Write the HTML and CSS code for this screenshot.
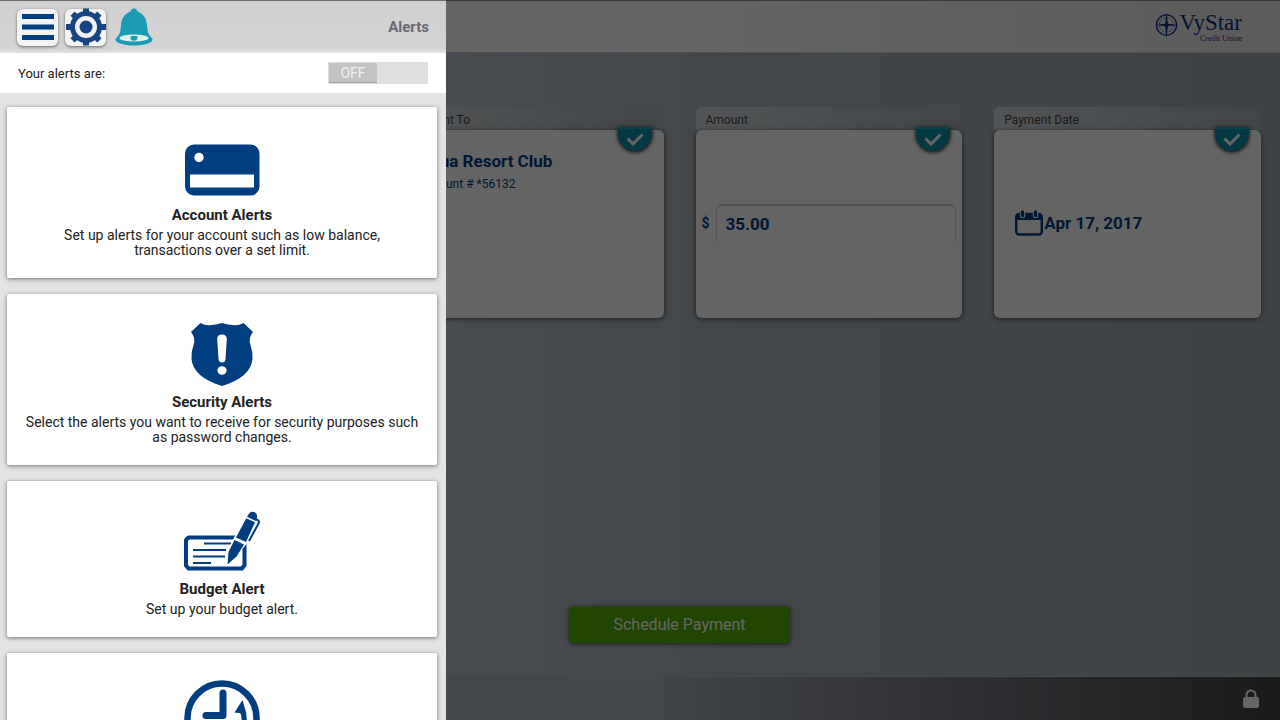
FILE: index.html
```
<!DOCTYPE html>
<html lang="en">

<head>
    <meta charset="UTF-8">
    <meta name="viewport" content="width=device-width, initial-scale=1.0">
    <title>Alerts</title>
    <link rel="stylesheet" href="styles.css">
</head>

<body>
    <div class="page">
        <header class="top">
            <a href="#" class="logo">
                <svg width="25" height="32" viewBox="0 0 26 32" fill="none" stroke="#0b2f78">
                    <circle cx="13" cy="16" r="10.5" stroke-width="1.4" />
                    <circle cx="13" cy="16" r="7.5" stroke-width="0.8" stroke-dasharray="2 1.5" />
                    <path d="M13 3l1.400 11.600L25 16l-10.600 1.400L13 29l-1.400-11.600L1 16l10.600-1.400z" fill="#0b2f78" stroke="none" />
                </svg>
                <span class="brand">VyStar<small>Credit Union</small></span>
            </a>
        </header>

        <main>
            <div class="cards">
                <section class="card">
                    <h2>Payment To</h2>
                    <div class="card-body payee">
                        <strong>Aqua Resort Club</strong>
                        <span>Account # *56132</span>
                        <i class="done"><svg width="18" height="14" viewBox="0 0 18 14"><path d="M1.500 6.500L7 12l9.500-9.500" /></svg></i>
                    </div>
                </section>
                <section class="card">
                    <h2><label for="amount">Amount</label></h2>
                    <div class="card-body amount">
                        <span>$</span>
                        <input type="text" id="amount" value="35.00">
                        <i class="done"><svg width="18" height="14" viewBox="0 0 18 14"><path d="M1.500 6.500L7 12l9.500-9.500" /></svg></i>
                    </div>
                </section>
                <section class="card">
                    <h2>Payment Date</h2>
                    <div class="card-body date">
                        <svg width="30" height="26" viewBox="0 0 30 26">
                            <rect x="2.200" y="4" width="25.600" height="20.500" rx="3" fill="none" stroke="#003b82" stroke-width="2.400" />
                            <path d="M2 10V5.500q0-2 2-2h22q2 0 2 2V10z" fill="#003b82" />
                            <path d="M8.500 1v4.500M21.500 1v4.500" stroke="#fff" stroke-width="5.500" stroke-linecap="round" />
                            <path d="M8.500 2v3.500M21.500 2v3.500" stroke="#003b82" stroke-width="3.400" stroke-linecap="round" />
                        </svg>
                        <strong>Apr 17, 2017</strong>
                        <i class="done"><svg width="18" height="14" viewBox="0 0 18 14"><path d="M1.500 6.500L7 12l9.500-9.500" /></svg></i>
                    </div>
                </section>
            </div>
            <button type="button" class="schedule">Schedule Payment</button>
        </main>

        <footer>
            <svg width="16" height="20" viewBox="0 0 16 20">
                <path d="M3.500 9V6a4.500 4.500 0 0 1 9 0v3" fill="none" stroke="#fff" stroke-width="2" />
                <rect x="0" y="8" width="16" height="11" rx="2.500" fill="#fff" />
            </svg>
        </footer>
    </div>

    <div class="overlay"></div>

    <aside class="drawer">
        <div class="drawer-top">
            <button type="button" class="tool" aria-label="Menu">
                <svg width="32" height="28" viewBox="0 0 32 28" fill="#003e80">
                    <path d="M0 1h32v5H0zM0 11.500h32v5H0zM0 22h32v5H0z" />
                </svg>
            </button>
            <button type="button" class="tool" aria-label="Settings">
                <svg width="40" height="38" viewBox="-20 -19 40 38" fill="#174584">
                    <path d="M-3-18.500h6v37h-6zM-20-3h40v6h-40z" />
                    <path d="M-3-19h6v38h-6zM-19-3h38v6h-38z" transform="rotate(45)" />
                    <circle r="16" />
                    <circle r="11" fill="#f3f3f3" />
                    <circle r="6.500" />
                </svg>
            </button>
            <button type="button" class="tool bell" aria-label="Alerts">
                <svg width="38" height="38" viewBox="0 0 38 38">
                    <path d="M19 0.500c2 0 3 1 3.200 2.700C29 6 31.500 11 32 17c.5 6 1 8.500 3.500 11.500 1.200 1.400 2 2 2 3C37.500 35 29 37.500 19 37.500S.5 35 .5 31.500c0-1 .8-1.600 2-3C5 25.500 5.500 23 6 17 6.500 11 9 6 15.800 3.200 16 1.500 17 .5 19 .5z" fill="#1a9cb4" />
                    <ellipse cx="19" cy="30" rx="14.500" ry="3.600" fill="#e3eff1" />
                    <path d="M15.500 28.500q3.500-1.500 7 0v1.200a3.500 3 0 0 1-7 0z" fill="#1a9cb4" />
                </svg>
            </button>
            <h1>Alerts</h1>
        </div>

        <label class="status">
            Your alerts are:
            <span class="switch"><input type="checkbox"><b>OFF</b></span>
        </label>

        <nav>
            <a href="#" class="alert">
                <svg width="80" height="66" viewBox="0 0 80 66">
                    <rect x="3" y="10.500" width="74.500" height="51" rx="9" fill="#003e80" />
                    <circle cx="17" cy="23.500" r="4.700" fill="#fff" />
                    <path d="M8 40.500h64v13H8z" fill="#fff" />
                </svg>
                <h3>Account Alerts</h3>
                <p>Set up alerts for your account such as low balance, transactions over a set limit.</p>
            </a>
            <a href="#" class="alert">
                <svg width="80" height="66" viewBox="0 0 80 66">
                    <path d="M18.500 2q4.500 2.500 9 2.300Q34 4 40 2q6 2 12.500 2.300 4.500.2 9-2.300L71 11q-5 6-2.500 13 2.500 7 2 14-1.500 18-30.500 27Q11 56 9.500 38q-.5-7 2-14Q14 17 9 11z" fill="#003e80" />
                    <path d="M35.200 18q0-4.500 4.800-4.500t4.800 4.500L43.500 38q-.4 3.500-3.500 3.500T36.500 38z" fill="#fff" />
                    <ellipse cx="40" cy="49.500" rx="4.600" ry="4.200" fill="#fff" />
                </svg>
                <h3>Security Alerts</h3>
                <p>Select the alerts you want to receive for security purposes such as password changes.</p>
            </a>
            <a href="#" class="alert">
                <svg width="80" height="66" viewBox="0 0 80 66">
                    <path d="M6.500 29.500H60l2.500 2.500v25L60 60.500H6.500L4 57.500V32z" fill="none" stroke="#003e80" stroke-width="4" stroke-linejoin="round" />
                    <path d="M22 35.500h27M11 42h33M11 48.500h32M11 55h18" stroke="#003e80" stroke-width="2.200" />
                    <path d="M43 58l3-17 16-30 8-10 9 7-1 11-16 20z" fill="#fff" />
                    <path d="M45.500 56.500L46.500 44l6-12 9.500 4.500-7.500 12z" fill="#003e80" />
                    <path d="M54 29.500L65 9q3-6.500 7-5 4.500 2 2.500 7L64 34z" fill="#003e80" />
                    <path d="M64.500 9.500l10 4.500" stroke="#fff" stroke-width="1.600" />
                    <path d="M73.500 11l3 1.500q1 1.500 0 3L67 33" fill="none" stroke="#003e80" stroke-width="2" />
                </svg>
                <h3>Budget Alert</h3>
                <p>Set up your budget alert.</p>
            </a>
            <a href="#" class="alert" aria-label="Scheduled alerts">
                <svg width="80" height="76" viewBox="0 0 80 76" fill="none" stroke="#003e80">
                    <circle cx="40" cy="38" r="34.500" stroke-width="6.500" />
                    <path d="M41 13v22.500H24" stroke-width="7" stroke-linecap="round" stroke-linejoin="round" />
                    <path d="M60 30q7 16-8 26" stroke-width="5" />
                    <path d="M60.500 20l4 14-12-1.500z" fill="#003e80" stroke="none" />
                </svg>
            </a>
        </nav>
    </aside>
</body>

</html>
```
FILE: styles.css
```
* {
    box-sizing: border-box;
}

body {
    margin: 0;
    height: 100vh;
    overflow: hidden;
    font-family: Roboto, "Liberation Sans", sans-serif;
    font-size: 14px;
    color: #222;
}

h1, h2, h3, p {
    margin: 0;
}

a {
    color: inherit;
    text-decoration: none;
}

button {
    border: 0;
    padding: 0;
    font-family: inherit;
    cursor: pointer;
}

.page {
    display: flex;
    flex-direction: column;
    height: 100%;
    background: linear-gradient(to right, #b2bcc6 35%, #a5afb5 60%, #a0a8ad);
}

/* header */
.top {
    display: flex;
    justify-content: flex-end;
    align-items: center;
    height: 53px;
    padding-right: 38px;
    border-top: 1px solid #888;
    border-bottom: 1px solid #c4c8cc;
    background: linear-gradient(to right, #fdfdfd 50%, #e4e4e4);
}

.logo {
    display: flex;
    align-items: center;
    color: #0b2f78;
}

.logo svg {
    margin-bottom: 4px;
}

.brand {
    font-family: "Liberation Serif", serif;
    font-size: 23px;
    line-height: 24px;
}

.brand small {
    display: block;
    font-size: 8px;
    line-height: 8px;
    text-align: right;
}

/* payment cards */
main {
    flex: 1;
    display: flex;
    flex-direction: column;
    justify-content: space-between;
    align-items: center;
    padding: 54px 19px 33px 98px;
}

.cards {
    display: grid;
    grid-template-columns: repeat(4, minmax(0, 1fr));
    gap: 32px;
    width: 100%;
}

.card:first-child {
    grid-column: 2;
}

.card h2 {
    height: 23px;
    padding-left: 10px;
    border-radius: 6px 6px 0 0;
    background: linear-gradient(to right, #ccd0d4, #a5afb5 95%);
    font-size: 12px;
    line-height: 26px;
    font-weight: normal;
    color: #444;
}

.card-body {
    position: relative;
    display: flex;
    height: 188px;
    padding-bottom: 2px;
    border-radius: 6px;
    background: #fbfbfb;
    box-shadow: 0 1px 5px rgba(0, 0, 0, .6);
    color: #003b82;
}

.card-body strong {
    font-size: 17px;
    line-height: 20px;
}

.done {
    position: absolute;
    top: -3px;
    right: 12px;
    display: flex;
    justify-content: center;
    width: 34px;
    height: 24px;
    padding-top: 3px;
    border-top: 2px solid #20a0b8;
    border-radius: 0 0 17px 17px;
    background: #0c8fa8;
    box-shadow: 0 1px 4px #000;
}

.done path {
    fill: none;
    stroke: #fff;
    stroke-width: 3;
}

.payee {
    flex-direction: column;
    padding-top: 21px;
    padding-left: 22px;
}

.payee span {
    margin-top: 4px;
    font-size: 12px;
    line-height: 18px;
}

.amount {
    align-items: center;
    gap: 6px;
    padding-left: 6px;
    padding-right: 6px;
    font-weight: bold;
}

.amount input {
    flex: 1;
    min-width: 0;
    height: 38px;
    padding: 0 9px;
    border: 1px solid #d5d5d5;
    border-top: 2px solid #c8c8c8;
    border-bottom: 0;
    border-radius: 6px 6px 0 0;
    background: #fdfdfd;
    font: bold 17px Roboto, sans-serif;
    color: #003b82;
}

.date {
    align-items: center;
    padding-left: 20px;
}

.schedule {
    width: 221px;
    height: 37px;
    border-radius: 5px;
    background: #50b000;
    box-shadow: 0 1px 4px rgba(0, 0, 0, .6);
    font-size: 16px;
    color: #fff;
}

footer {
    display: flex;
    justify-content: flex-end;
    align-items: center;
    height: 44px;
    padding-right: 21px;
    border-top: 1px solid #b2b8bc;
    background: linear-gradient(to right, #a9b2ba 50%, #75777f 75%, #444446);
}

/* shade over the page while the drawer is open */
.overlay {
    position: absolute;
    top: 0;
    right: 0;
    bottom: 0;
    left: 0;
    background: rgba(0, 0, 0, .6);
}

/* drawer */
.drawer {
    position: absolute;
    top: 0;
    bottom: 0;
    left: 0;
    width: 446px;
    max-width: 100%;
    overflow: hidden;
    background: #e3e3e3;
}

.drawer-top {
    display: flex;
    align-items: center;
    gap: 7px;
    height: 53px;
    padding: 0 17px;
    border-top: 1px solid #6e6b70;
    background: linear-gradient(#d0d0d0, #d4d4d4 48px, #e6e6e6);
}

.tool {
    display: flex;
    justify-content: center;
    align-items: center;
    width: 41px;
    height: 37px;
    border-radius: 6px;
    background: #f3f3f3;
    box-shadow: 0 1px 3px rgba(0, 0, 0, .5);
}

.tool svg {
    flex: none;
}

.bell {
    background: none;
    box-shadow: none;
}

.drawer-top h1 {
    margin-left: auto;
    font-size: 15px;
    color: #6b6875;
}

.status {
    display: flex;
    justify-content: space-between;
    align-items: center;
    height: 40px;
    padding: 0 18px;
    background: #fff;
    font-size: 13px;
}

.switch {
    position: relative;
    width: 100px;
    height: 22px;
    padding: 1px;
    background: #dfdfdf;
}

.switch input {
    position: absolute;
    inset: 0;
    width: 100%;
    height: 100%;
    margin: 0;
    opacity: 0;
}

.switch b {
    display: block;
    width: 48px;
    height: 20px;
    border-bottom: 1px solid #a5a5a5;
    background: #c3c3c3;
    font-size: 14px;
    line-height: 21px;
    font-weight: normal;
    text-align: center;
    color: #f0f0f0;
}

nav {
    display: flex;
    flex-direction: column;
    gap: 16px;
    padding: 14px 9px 0 7px;
}

.alert {
    padding: 27px 18px 20px;
    border-radius: 2px;
    background: #fff;
    box-shadow: 0 1px 4px rgba(0, 0, 0, .5);
    text-align: center;
}

.alert svg {
    display: block;
    margin: 0 auto 6px;
}

.alert h3 {
    font-size: 15px;
    line-height: 18px;
}

.alert p {
    margin-top: 4px;
    font-size: 14px;
    line-height: 15px;
}
```
